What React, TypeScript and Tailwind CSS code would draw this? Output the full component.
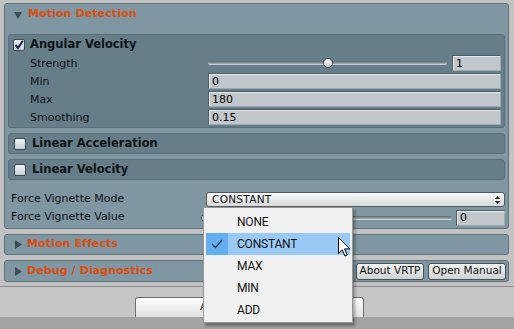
const tri = 'fill-[#3b4d55]'

function DownTriangle() {
  return (
    <svg width="8" height="8" viewBox="0 0 8 8" className="shrink-0">
      <polygon points="0,1 8,1 4,8" className={tri} />
    </svg>
  )
}

function RightTriangle() {
  return (
    <svg width="8" height="9" viewBox="0 0 8 9" className="shrink-0">
      <polygon points="1,0 8,4.5 1,9" className={tri} />
    </svg>
  )
}

function Checkbox({ checked }: { checked?: boolean }) {
  return (
    <div className="w-[12px] h-[12px] shrink-0 rounded-[2px] border border-[#3c4b52] bg-gradient-to-b from-[#eef1f2] to-[#c9d0d4] flex items-center justify-center">
      {checked && (
        <svg width="10" height="10" viewBox="0 0 10 10">
          <path d="M1.5 5 L4 8 L8.8 0.8" stroke="#1b2550" strokeWidth="2" fill="none" />
        </svg>
      )}
    </div>
  )
}

function Field({ value, className = '' }: { value: string; className?: string }) {
  return (
    <div
      className={
        'h-[16px] flex items-center px-[3px] bg-[#c1c7ca] border border-[#4e5d64] border-r-[#9aabb2] border-b-[#9aabb2] shadow-[inset_1px_1px_0_#e4e8ea] text-[11px] text-black leading-none ' +
        className
      }
    >
      {value}
    </div>
  )
}

function Slider({ pos }: { pos: number }) {
  return (
    <div className="flex-1 relative h-[16px] flex items-center">
      <div className="w-full h-[4px] rounded-[2px] bg-gradient-to-b from-[#5b676c] to-[#a9b2b6] border-b border-[#c9d0d3]" />
      <div
        className="absolute top-[3px] w-[10px] h-[10px] -ml-[5px] rounded-full border border-[#3f4a4f] bg-gradient-to-b from-[#ffffff] to-[#c6cbce]"
        style={{ left: `${pos * 100}%` }}
      />
    </div>
  )
}

function Row({ label, children }: { label: string; children: React.ReactNode }) {
  return (
    <div className="h-[18px] flex items-start">
      <div className="w-[178px] shrink-0 text-[11px] leading-[16px] pt-[1px] text-[#111]">{label}</div>
      <div className="flex-1 flex items-start gap-[5px]">{children}</div>
    </div>
  )
}

function SubBox({ title }: { title: string }) {
  return (
    <div className="h-[21px] mt-[5px] rounded-[3px] border border-[#5a6f78] bg-[#667e89] flex items-center gap-[6px] pl-[5px]">
      <Checkbox />
      <span className="text-[11.5px] font-bold text-[#0e1214]">{title}</span>
    </div>
  )
}

function Button({ label, className = '' }: { label: string; className?: string }) {
  return (
    <div
      className={
        'h-[17px] rounded-[3px] border border-[#4a4f52] bg-gradient-to-b from-[#f2f2f2] to-[#cfd2d3] flex items-center justify-center text-[10.5px] text-[#111] ' +
        className
      }
    >
      {label}
    </div>
  )
}

function Cursor() {
  return (
    <svg width="13" height="21" viewBox="0 0 13 21" className="absolute left-[338px] top-[237px]">
      <path
        d="M0.5 0.5 L0.5 16.5 L4.3 12.8 L6.9 19 L9.2 18 L6.6 11.9 L11.8 11.9 Z"
        fill="#ffffff"
        stroke="#000000"
        strokeWidth="1"
        strokeLinejoin="round"
      />
    </svg>
  )
}

function Menu() {
  const items = ['NONE', 'CONSTANT', 'MAX', 'MIN', 'ADD']
  return (
    <div className="absolute left-[203px] top-[207px] w-[150px] pt-[3px] pb-[1px] px-[2px] bg-[#f0f0f0] border border-[#979797] shadow-[2px_3px_3px_rgba(0,0,0,0.35)] font-['Roboto',sans-serif]">
      {items.map((it) => {
        const active = it === 'CONSTANT'
        return (
          <div key={it} className={'h-[22px] flex items-center ' + (active ? 'bg-[#99c9f5]' : '')}>
            <div className={'w-[22px] h-full flex items-center justify-center ' + (active ? 'bg-[#62aef1]' : '')}>
              {active && (
                <svg width="12" height="10" viewBox="0 0 12 10">
                  <path d="M1 5 L4.5 8.5 L11 1" stroke="#22384f" strokeWidth="1.3" fill="none" />
                </svg>
              )}
            </div>
            <span className="ml-[9px] text-[12px] text-[#111] tracking-[-0.2px]">{it}</span>
          </div>
        )
      })}
    </div>
  )
}

export default function App() {
  return (
    <div className="w-[514px] h-[329px] relative overflow-hidden bg-[#c2c2c2] font-['DejaVu_Sans',sans-serif] flex flex-col">
      <div className="pl-[4px] pr-[5px] pt-[3px] flex flex-col">
        {/* Motion Detection */}
        <div className="rounded-[3px] border border-[#60737b] bg-[#7e97a2] flex flex-col pl-[3px] pr-[3px] pb-[2px]">
          <div className="h-[21px] flex items-center gap-[6px] pl-[6px]">
            <DownTriangle />
            <span className="text-[11px] font-bold text-[#dd4b0d] tracking-[0.1px]">Motion Detection</span>
          </div>

          <div className="mt-[9px] rounded-[3px] border border-[#5a6f78] bg-[#667e89] flex flex-col pl-[21px] pr-[3px]">
            <div className="h-[20px] flex items-center gap-[5px] -ml-[17px]">
              <Checkbox checked />
              <span className="text-[11.5px] font-bold text-[#0e1214]">Angular Velocity</span>
            </div>
            <Row label="Strength">
              <Slider pos={0.5} />
              <Field value="1" className="w-[49px]" />
            </Row>
            <Row label="Min">
              <Field value="0" className="flex-1" />
            </Row>
            <Row label="Max">
              <Field value="180" className="flex-1" />
            </Row>
            <Row label="Smoothing">
              <Field value="0.15" className="flex-1" />
            </Row>
          </div>

          <SubBox title="Linear Acceleration" />
          <SubBox title="Linear Velocity" />

          <div className="mt-[11px] h-[17px] flex items-center pl-[3px]">
            <div className="w-[195px] shrink-0 text-[11px] text-[#111]">Force Vignette Mode</div>
            <div className="flex-1 h-[15px] rounded-[3px] border border-[#51595d] bg-gradient-to-b from-[#fafafa] to-[#d6d8d9] flex items-center justify-between pl-[5px] pr-[4px] text-[10.5px] text-[#111]">
              <span className="tracking-[0.3px]">CONSTANT</span>
              <svg width="5" height="8" viewBox="0 0 5 8">
                <polygon points="2.5,0 5,3 0,3" fill="#222" />
                <polygon points="2.5,8 5,5 0,5" fill="#222" />
              </svg>
            </div>
          </div>
          <div className="h-[17px] flex items-center pl-[3px] mt-[1px]">
            <div className="w-[195px] shrink-0 text-[11px] text-[#111]">Force Vignette Value</div>
            <div className="flex-1 flex items-center gap-[4px]">
              <Slider pos={0} />
              <Field value="0" className="w-[49px]" />
            </div>
          </div>
        </div>

        {/* Motion Effects */}
        <div className="mt-[5px] h-[21px] rounded-[3px] border border-[#60737b] bg-[#7e97a2] flex items-center gap-[5px] pl-[9px]">
          <RightTriangle />
          <span className="text-[11px] font-bold text-[#dd4b0d] tracking-[0.1px]">Motion Effects</span>
        </div>

        {/* Debug */}
        <div className="mt-[5px] h-[22px] rounded-[3px] border border-[#60737b] bg-[#7e97a2] flex items-center pl-[9px] pr-[2px]">
          <RightTriangle />
          <span className="ml-[5px] text-[11px] font-bold text-[#dd4b0d] tracking-[0.1px]">Debug / Diagnostics</span>
          <div className="ml-auto flex gap-[4px]">
            <Button label="About VRTP" className="w-[68px]" />
            <Button label="Open Manual" className="w-[78px]" />
          </div>
        </div>
      </div>

      <div className="mt-[4px] border-t border-[#8e8e8e] bg-[#c6c6c6] h-[31px] flex items-end pl-[135px]">
        <div className="w-[229px] h-[20px] rounded-t-[3px] border border-b-0 border-[#6c6c6c] bg-gradient-to-b from-[#ffffff] to-[#e2e2e2] flex items-center pl-[64px] text-[11px] text-[#111]">
          Apply
        </div>
      </div>
      <div className="flex-1 bg-[#a4a4a4]" />

      <Menu />
      <Cursor />
    </div>
  )
}
